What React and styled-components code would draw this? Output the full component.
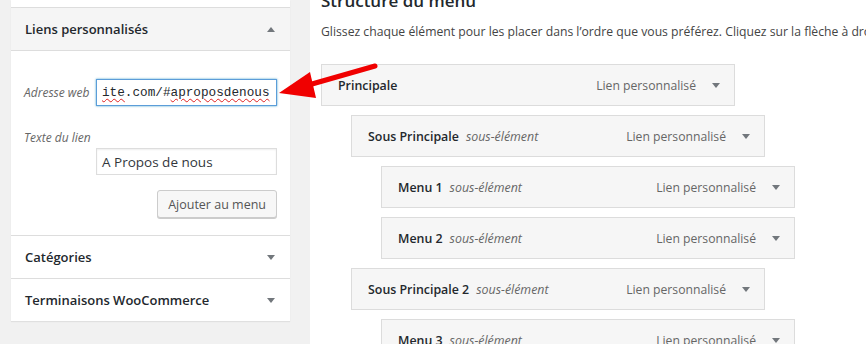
import React from 'react';
import styled, { createGlobalStyle } from 'styled-components';

const Global = createGlobalStyle`
  html, body { margin: 0; padding: 0; }
  body {
    background: #f1f1f1;
    font-family: "Open Sans", "Noto Sans", sans-serif;
    font-size: 12px;
    color: #23282d;
    overflow: hidden;
  }
`;

const Page = styled.div`
  position: relative;
  display: flex;
  align-items: flex-start;
  width: 866px;
  height: 344px;
  overflow: hidden;
`;

const SideCol = styled.div`
  width: 279px;
  margin-left: 11px;
  flex-shrink: 0;
`;

const Panel = styled.div`
  background: #fff;
  box-shadow: 0 1px 1px rgba(0, 0, 0, 0.07);
`;

const PrevSection = styled.div`
  height: 7px;
  border-bottom: 1px solid #dddddd;
`;

const Section = styled.div`
  & + & { border-top: 1px solid #dddddd; }
`;

const SectionHead = styled.div`
  height: 42px;
  display: flex;
  align-items: center;
  justify-content: space-between;
  padding: 0 15px 0 14px;
  background: ${p => (p.open ? '#f5f5f5' : '#fff')};
  border-bottom: ${p => (p.open ? '1px solid #dddddd' : 'none')};
  font-size: 13px;
  font-weight: 600;
  color: #23282d;
`;

const Tri = styled.span`
  width: 0;
  height: 0;
  border-left: 4px solid transparent;
  border-right: 4px solid transparent;
  ${p => (p.up
    ? 'border-bottom: 5px solid #72777c;'
    : 'border-top: 5px solid #72777c;')}
`;

const SectionBody = styled.div`
  padding: 28px 13px 17px 13px;
  display: flex;
  flex-direction: column;
`;

const FieldRow = styled.div`
  display: flex;
  align-items: center;
  justify-content: space-between;
  margin-bottom: ${p => p.mb || 0}px;
`;

const FieldLabel = styled.label`
  font-style: italic;
  color: #666;
  font-size: 12px;
  line-height: 16px;
  margin-bottom: ${p => p.mb || 0}px;
`;

const Input = styled.div`
  box-sizing: border-box;
  width: 181px;
  height: 27px;
  display: flex;
  align-items: center;
  padding: 0 5px;
  background: #fff;
  border: 1px solid ${p => (p.focus ? '#5b9dd9' : '#dddddd')};
  box-shadow: ${p => (p.focus ? '0 0 2px rgba(30,140,190,0.8)' : 'inset 0 1px 2px rgba(0,0,0,0.07)')};
  color: #32373c;
  font-size: 13.5px;
  margin-left: auto;
  white-space: nowrap;
  overflow: hidden;
`;

const Mono = styled.span`
  font-family: "Liberation Mono", "DejaVu Sans Mono", monospace;
  font-size: 12.7px;
  color: #23282d;
`;

const Misspelled = styled.span`
  text-decoration: underline wavy #e02020;
  text-decoration-thickness: 1px;
  text-underline-offset: 2px;
`;

const Button = styled.button`
  align-self: flex-end;
  height: 28px;
  padding: 0 10px;
  background: #f7f7f7;
  border: 1px solid #cccccc;
  border-radius: 3px;
  box-shadow: 0 1px 0 #cccccc;
  color: #555;
  font-family: inherit;
  font-size: 12.5px;
  margin-top: 15px;
`;

const Main = styled.div`
  flex: 1;
  margin-left: 20px;
  height: 344px;
  background: #fff;
  padding-left: 11px;
  overflow: hidden;
`;

const Title = styled.h3`
  margin: -9px 0 0 0;
  font-size: 17px;
  font-weight: 600;
  line-height: 20px;
  color: #23282d;
`;

const Desc = styled.p`
  margin: 13px 0 0 0;
  font-size: 12.2px;
  line-height: 16px;
  color: #444;
  white-space: nowrap;
`;

const MenuList = styled.div`
  margin-top: 24px;
  display: flex;
  flex-direction: column;
  gap: 9px;
`;

const Item = styled.div`
  box-sizing: border-box;
  width: 414px;
  height: 42px;
  margin-left: ${p => p.depth * 30}px;
  display: flex;
  align-items: center;
  padding: 0 14px 0 16px;
  background: #f6f6f6;
  border: 1px solid #dcdcdc;
  flex-shrink: 0;
`;

const ItemTitle = styled.span`
  font-weight: 600;
  font-size: 12.4px;
  color: #23282d;
`;

const SubTag = styled.span`
  font-style: italic;
  color: #666;
  font-size: 12.4px;
  margin-left: 7px;
`;

const ItemType = styled.span`
  margin-left: auto;
  margin-right: 16px;
  color: #666;
  font-size: 12.2px;
`;

const Annotation = styled.svg`
  position: absolute;
  left: 0;
  top: 0;
  pointer-events: none;
`;

const items = [
  { title: 'Principale', depth: 0 },
  { title: 'Sous Principale', depth: 1, sub: true },
  { title: 'Menu 1', depth: 2, sub: true },
  { title: 'Menu 2', depth: 2, sub: true },
  { title: 'Sous Principale 2', depth: 1, sub: true },
  { title: 'Menu 3', depth: 2, sub: true },
];

export default function App() {
  return (
    <Page>
      <Global />
      <SideCol>
        <Panel>
          <PrevSection />
          <Section>
            <SectionHead open>
              Liens personnalisés
              <Tri up />
            </SectionHead>
            <SectionBody>
              <FieldRow mb={24}>
                <FieldLabel>Adresse web</FieldLabel>
                <Input focus>
                  <Mono>
                    <Misspelled>ite</Misspelled>.com/#<Misspelled>aproposdenous</Misspelled>
                  </Mono>
                </Input>
              </FieldRow>
              <FieldLabel mb={2}>Texte du lien</FieldLabel>
              <FieldRow>
                <Input>A Propos de nous</Input>
              </FieldRow>
              <Button>Ajouter au menu</Button>
            </SectionBody>
          </Section>
          <Section>
            <SectionHead>
              Catégories
              <Tri />
            </SectionHead>
          </Section>
          <Section>
            <SectionHead>
              Terminaisons WooCommerce
              <Tri />
            </SectionHead>
          </Section>
        </Panel>
      </SideCol>
      <Main>
        <Title>Structure du menu</Title>
        <Desc>
          Glissez chaque élément pour les placer dans l’ordre que vous préférez. Cliquez sur la flèche à droite de l’élément pour afficher d’autres options de configuration.
        </Desc>
        <MenuList>
          {items.map(it => (
            <Item key={it.title} depth={it.depth}>
              <ItemTitle>{it.title}</ItemTitle>
              {it.sub && <SubTag>sous-élément</SubTag>}
              <ItemType>Lien personnalisé</ItemType>
              <Tri />
            </Item>
          ))}
        </MenuList>
      </Main>
      <Annotation width="866" height="344" viewBox="0 0 866 344">
        <line x1="375" y1="66" x2="305" y2="86" stroke="#f00000" strokeWidth="5" strokeLinecap="round" />
        <polygon points="279,93 310,72 316,98" fill="#f00000" />
      </Annotation>
    </Page>
  );
}
